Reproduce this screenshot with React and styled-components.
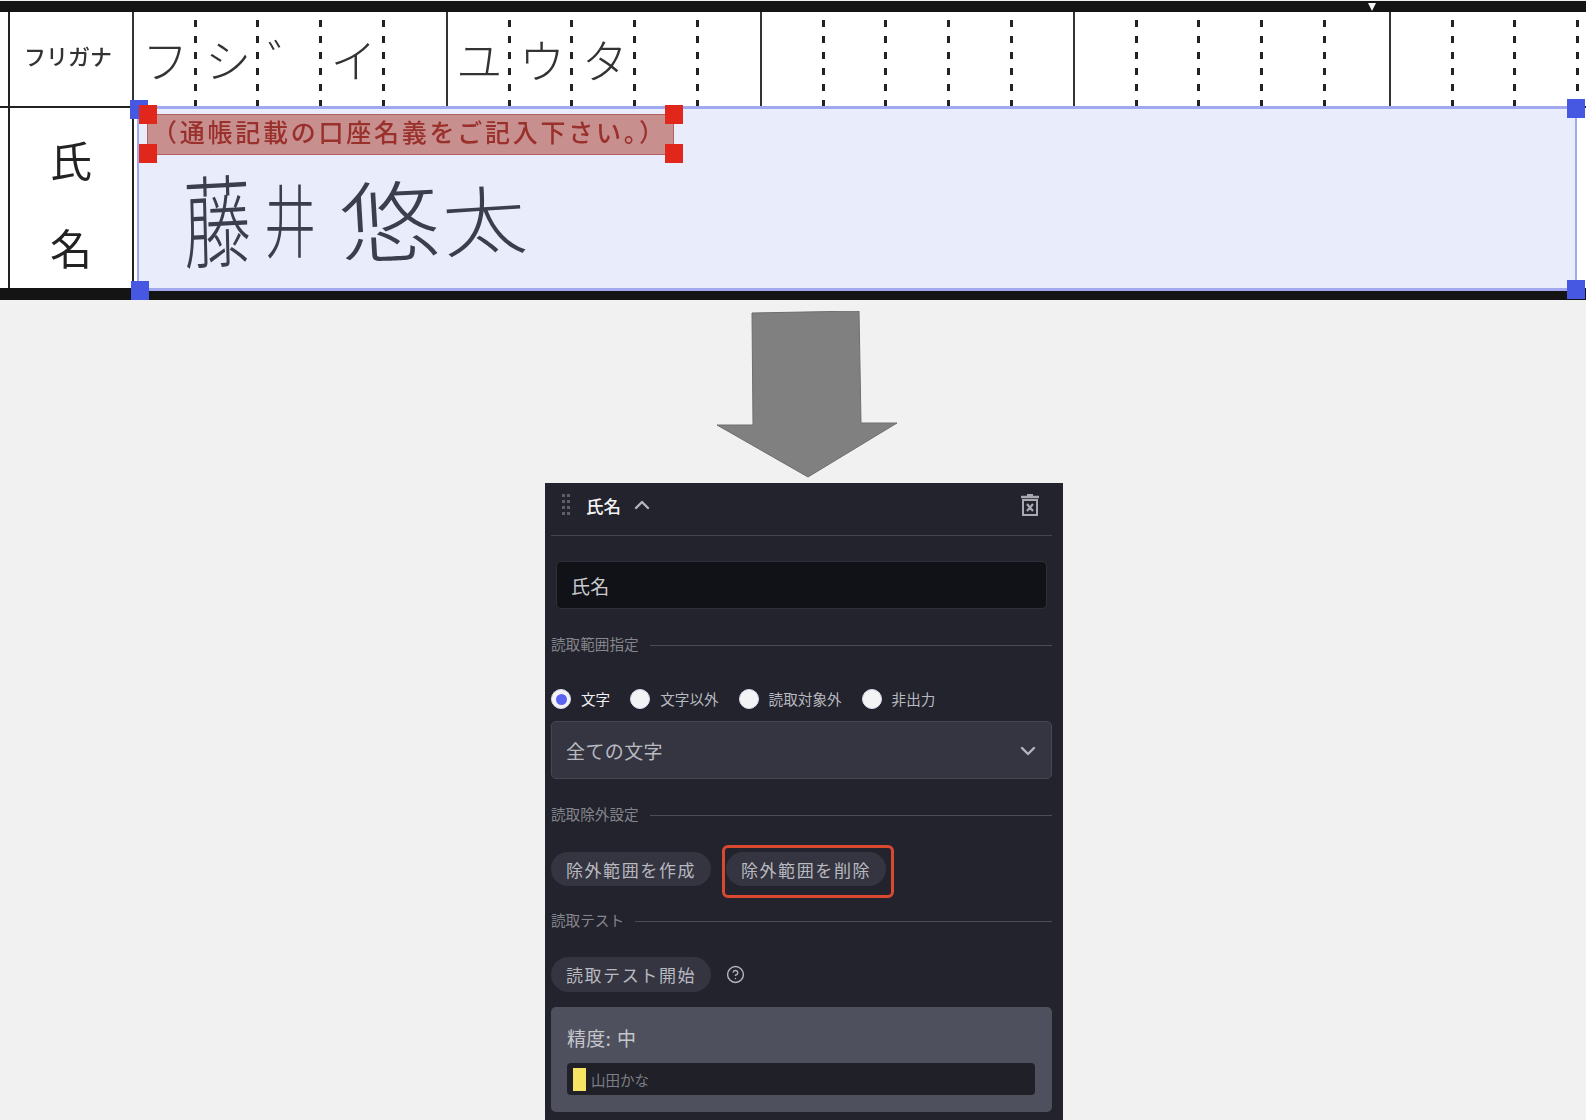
import React from 'react';
import styled, { createGlobalStyle } from 'styled-components';
import { ChevronUp, ChevronDown, CircleHelp } from 'lucide-react';

const GlobalStyle = createGlobalStyle`
	html, body {
		margin: 0;
		padding: 0;
		background: #f1f1f1;
	}
	body {
		font-family: Inter, "Noto Sans CJK JP", sans-serif;
	}
`;

const Page = styled.div`
	width: 1586px;
	height: 1120px;
	overflow: hidden;
	padding-top: 1px;
	box-sizing: border-box;
`;

// Scanned form
const Scan = styled.div`
	position: relative;
	height: 299px;
	background: #fff;
	display: flex;
	flex-direction: column;
	filter: blur(0.5px);
	font-family: "Noto Sans CJK JP", sans-serif;
	color: #222;
`;

const Band = styled.div`
	flex: 0 0 ${props => props.size}px;
	background: #141414;
	position: relative;
`;

const Marker = styled.span`
	position: absolute;
	left: 1368px;
	top: 2px;
	width: 8px;
	height: 8px;
	background: #f4f4f4;
	clip-path: polygon(0 0, 100% 0, 50% 100%);
`;

const KanaRow = styled.div`
	flex: 0 0 94px;
	display: flex;
	padding-left: 8px;
	border-bottom: 2px solid #222;
	overflow: hidden;
`;

const LabelCell = styled.div`
	flex: 0 0 124px;
	border-left: 2px solid #222;
	display: flex;
	align-items: center;
	justify-content: center;
	font-size: 22px;
	font-weight: 500;
	color: #333;
	padding: 0 6px 8px 0;
	box-sizing: border-box;
`;

const KanaGroup = styled.div`
	flex: 0 0 ${props => props.size}px;
	min-width: 0;
	border-left: 2px solid #333;
	display: flex;
	box-sizing: border-box;
`;

const KanaCell = styled.div`
	flex: 0 0 62.7px;
	display: flex;
	align-items: center;
	justify-content: center;
	font-size: 46px;
	font-weight: 300;
	color: #333;
	padding-bottom: 2px;
	box-sizing: border-box;
	background: linear-gradient(to bottom, #222 0 7px, transparent 7px 16px) right 8px / 3px 16px repeat-y;
	&:nth-child(5) {
		background: none;
	}
`;

const NameRow = styled.div`
	flex: 1;
	display: flex;
	padding-left: 8px;
`;

const NameLabel = styled.div`
	flex: 0 0 126px;
	border-left: 2px solid #222;
	border-right: 2px solid #222;
	box-sizing: border-box;
	display: flex;
	flex-direction: column;
	align-items: center;
	gap: 34px;
	padding-top: 24px;
	font-size: 42px;
	line-height: 54px;
	font-weight: 400;
	color: #222;
`;

const NameBody = styled.div`
	flex: 1;
	display: flex;
	flex-direction: column;
`;

const PrintedNote = styled.div`
	margin: 2px 0 0 18px;
	height: 41px;
	display: flex;
	align-items: center;
	font-size: 25px;
	font-weight: 500;
	letter-spacing: 2.75px;
	color: #a03a34;
	white-space: nowrap;
`;

const Handwriting = styled.div`
	display: flex;
	align-items: center;
	margin: 14px 0 0 43px;
	font-size: 84px;
	line-height: 104px;
	font-weight: 200;
	color: #3a3a3a;
`;

const HandChar = styled.span`
	display: inline-block;
	width: ${props => props.size}px;
	text-align: center;
	transform: scale(${props => props.sx}, ${props => props.sy}) rotate(${props => props.tilt}deg);
`;

// Selection overlays
const Selection = styled.div`
	position: absolute;
	left: 137px;
	top: 105px;
	width: 1440px;
	height: 185px;
	background: rgba(75, 95, 220, 0.12);
	border: 2px solid #a2a8ee;
	border-width: 3px 2px;
	box-sizing: border-box;
`;

const Exclusion = styled.div`
	position: absolute;
	left: 8px;
	top: 5px;
	width: 527px;
	height: 41px;
	background: rgba(160, 30, 10, 0.45);
	border: 1px solid #b5605c;
	box-sizing: border-box;
`;

const Handle = styled.span`
	position: absolute;
	width: 18px;
	height: 19px;
	background: ${props => (props.red ? '#e1261c' : '#4657e2')};
	left: ${props => props.x}px;
	top: ${props => props.y}px;
`;

// Arrow between the scan and the panel
const ArrowWrap = styled.div`
	margin: 11px 0 4px 716px;
	height: 168px;
`;

// Settings panel
const Panel = styled.section`
	margin-left: 545px;
	width: 518px;
	height: 637px;
	box-sizing: border-box;
	padding: 0 11px 0 6px;
	background: #22232c;
`;

const Header = styled.header`
	height: 52px;
	border-bottom: 1px solid #43454f;
	display: flex;
	align-items: center;
	padding: 0 13px 8px 11px;
	box-sizing: content-box;
	height: 44px;
`;

const Title = styled.h2`
	margin: 0 9px 0 16px;
	font-size: 17.5px;
	font-weight: 500;
	color: #f2f2f4;
`;

const TrashButton = styled.button`
	margin-left: auto;
	padding: 0;
	border: 0;
	background: none;
	display: flex;
`;

const NameInput = styled.div`
	margin: 25px 5px 0;
	height: 48px;
	box-sizing: border-box;
	padding-left: 14px;
	display: flex;
	align-items: center;
	background: #111217;
	border: 1px solid #2f3039;
	border-radius: 5px;
	font-size: 19px;
	letter-spacing: 0.3px;
	color: #c9cacd;
`;

const Section = styled.div`
	margin-top: ${props => props.top}px;
	height: 18px;
	line-height: 18px;
	padding-bottom: 2px;
	display: flex;
	align-items: center;
	gap: 11px;
	font-size: 14.6px;
	color: #85868d;
	white-space: nowrap;
	&:after {
		content: '';
		flex: 1;
		height: 1px;
		background: #4a4c56;
	}
`;

const RadioRow = styled.div`
	margin-top: 33px;
	height: 20px;
	display: flex;
	gap: 20px;
`;

const RadioItem = styled.label`
	display: flex;
	align-items: center;
	gap: 10px;
	font-size: 14.6px;
	color: ${props => (props.on ? '#f0f0f2' : '#b9bac0')};
`;

const RadioText = styled.span`
	margin-top: -2px;
`;

const RadioDot = styled.span`
	width: 20px;
	height: 20px;
	box-sizing: border-box;
	border-radius: 50%;
	background: #f3f3f6;
	border: 1px solid #dcdcf0;
	display: flex;
	align-items: center;
	justify-content: center;
	&:after {
		content: '';
		width: 11px;
		height: 11px;
		border-radius: 50%;
		background: ${props => (props.on ? '#5b63f2' : 'transparent')};
	}
`;

const SelectBox = styled.div`
	margin-top: 12px;
	height: 58px;
	box-sizing: border-box;
	padding: 0 11px 0 14px;
	display: flex;
	align-items: center;
	justify-content: space-between;
	background: #343541;
	border: 1px solid #464752;
	border-radius: 5px;
	font-size: 19px;
	letter-spacing: 0.4px;
	color: #b9bac0;
	svg {
		margin-top: 2px;
	}
`;

const ButtonRow = styled.div`
	margin-top: ${props => props.top}px;
	display: flex;
	align-items: center;
	gap: 15px;
`;

const Pill = styled.button`
	height: ${props => props.size}px;
	width: 160px;
	padding: 0;
	border: 0;
	border-radius: 18px;
	background: #343541;
	font-family: inherit;
	font-size: 17px;
	letter-spacing: 1.6px;
	color: #b9bac0;
	white-space: nowrap;
`;

const Highlight = styled.div`
	position: relative;
	display: flex;
	&:after {
		content: '';
		position: absolute;
		inset: -7px -8px -12px -4px;
		border: 3px solid #d9492f;
		border-radius: 6px;
	}
`;

const ResultBox = styled.div`
	margin-top: 15px;
	height: 105px;
	box-sizing: border-box;
	padding: 16px 17px 0 16px;
	background: #4e505e;
	border-radius: 5px;
`;

const Accuracy = styled.div`
	height: 32px;
	line-height: 34px;
	font-size: 19px;
	letter-spacing: 0.3px;
	color: #c6c7cc;
`;

const ResultBar = styled.div`
	margin-top: 8px;
	height: 32px;
	display: flex;
	align-items: center;
	gap: 5px;
	padding-left: 6px;
	background: #1f2028;
	border-radius: 4px;
	font-size: 14.5px;
	color: #7d7e85;
`;

const Swatch = styled.span`
	width: 13px;
	height: 23px;
	background: #f7e463;
`;

const GripIcon = () => (
	<svg width="8" height="22" viewBox="0 0 8 22" fill="#5c5e68">
		{[0, 6, 12, 18].map(y => (
			<g key={y}>
				<rect x="0" y={y} width="3" height="3" />
				<rect x="5" y={y} width="3" height="3" />
			</g>
		))}
	</svg>
);

const TrashIcon = () => (
	<svg width="18" height="22" viewBox="0 0 18 22" fill="none" stroke="#a9aab1">
		<path d="M6 1h6M0 3h18" strokeWidth="2.4" />
		<rect x="2" y="6" width="14" height="15" strokeWidth="2" />
		<path d="M6 10l6 7M12 10l-6 7" strokeWidth="2.2" />
	</svg>
);

const DownArrow = () => (
	<svg width="184" height="168" viewBox="716 311 184 168">
		<polygon
			points="752,313 859,311 861,423 897,423 808,477 717,425 753,425"
			fill="#808080"
			stroke="#6e6e6e"
			strokeWidth="1"
		/>
	</svg>
);

const kanaGroups = [
	{ size: 314, chars: ['フ', 'シ', '゛', 'イ', ''] },
	{ size: 314, chars: ['ユ', 'ウ', 'タ', '', ''] },
	{ size: 313, chars: ['', '', '', '', ''] },
	{ size: 316, chars: ['', '', '', '', ''] },
	{ size: 197, chars: ['', '', '', ''] },
];

const radios = [
	{ label: '文字', on: true },
	{ label: '文字以外' },
	{ label: '読取対象外' },
	{ label: '非出力' },
];

const App = () => (
	<Page>
		<GlobalStyle />
		<Scan>
			<Band size={11}>
				<Marker />
			</Band>
			<KanaRow>
				<LabelCell>フリガナ</LabelCell>
				{kanaGroups.map((group, i) => (
					<KanaGroup key={i} size={group.size}>
						{group.chars.map((char, j) => (
							<KanaCell key={j}>{char}</KanaCell>
						))}
					</KanaGroup>
				))}
			</KanaRow>
			<NameRow>
				<NameLabel>
					<span>氏</span>
					<span>名</span>
				</NameLabel>
				<NameBody>
					<PrintedNote>（通帳記載の口座名義をご記入下さい。）</PrintedNote>
					<Handwriting>
						<HandChar size={64} sx={0.8} sy={1.2} tilt={-2}>藤</HandChar>
						<HandChar size={98} sx={0.62} sy={0.95} tilt={0}>井</HandChar>
						<HandChar size={100} sx={1.2} sy={1.05} tilt={-3}>悠</HandChar>
						<HandChar size={90} sx={1} sy={0.9} tilt={-4}>太</HandChar>
					</Handwriting>
				</NameBody>
			</NameRow>
			<Band size={12} />
			<Selection>
				<Exclusion />
				<Handle x={-9} y={-9} />
				<Handle x={-8} y={172} />
				<Handle x={1428} y={-10} />
				<Handle x={1428} y={171} />
				<Handle red x={0} y={-4} />
				<Handle red x={0} y={35} />
				<Handle red x={526} y={-4} />
				<Handle red x={526} y={35} />
			</Selection>
		</Scan>

		<ArrowWrap>
			<DownArrow />
		</ArrowWrap>

		<Panel>
			<Header>
				<GripIcon />
				<Title>氏名</Title>
				<ChevronUp size={24} color="#b5b6bc" strokeWidth={2.4} />
				<TrashButton>
					<TrashIcon />
				</TrashButton>
			</Header>

			<NameInput>氏名</NameInput>

			<Section top={27}>読取範囲指定</Section>
			<RadioRow>
				{radios.map(radio => (
					<RadioItem key={radio.label} on={radio.on}>
						<RadioDot on={radio.on} />
						<RadioText>{radio.label}</RadioText>
					</RadioItem>
				))}
			</RadioRow>
			<SelectBox>
				全ての文字
				<ChevronDown size={24} color="#b5b6bc" strokeWidth={2.4} />
			</SelectBox>

			<Section top={27}>読取除外設定</Section>
			<ButtonRow top={26}>
				<Pill size={34}>除外範囲を作成</Pill>
				<Highlight>
					<Pill size={34}>除外範囲を削除</Pill>
				</Highlight>
			</ButtonRow>

			<Section top={26}>読取テスト</Section>
			<ButtonRow top={25}>
				<Pill size={35}>読取テスト開始</Pill>
				<CircleHelp size={19} color="#b5b6bc" strokeWidth={1.8} />
			</ButtonRow>

			<ResultBox>
				<Accuracy>精度: 中</Accuracy>
				<ResultBar>
					<Swatch />
					山田かな
				</ResultBar>
			</ResultBox>
		</Panel>
	</Page>
);

export default App;
